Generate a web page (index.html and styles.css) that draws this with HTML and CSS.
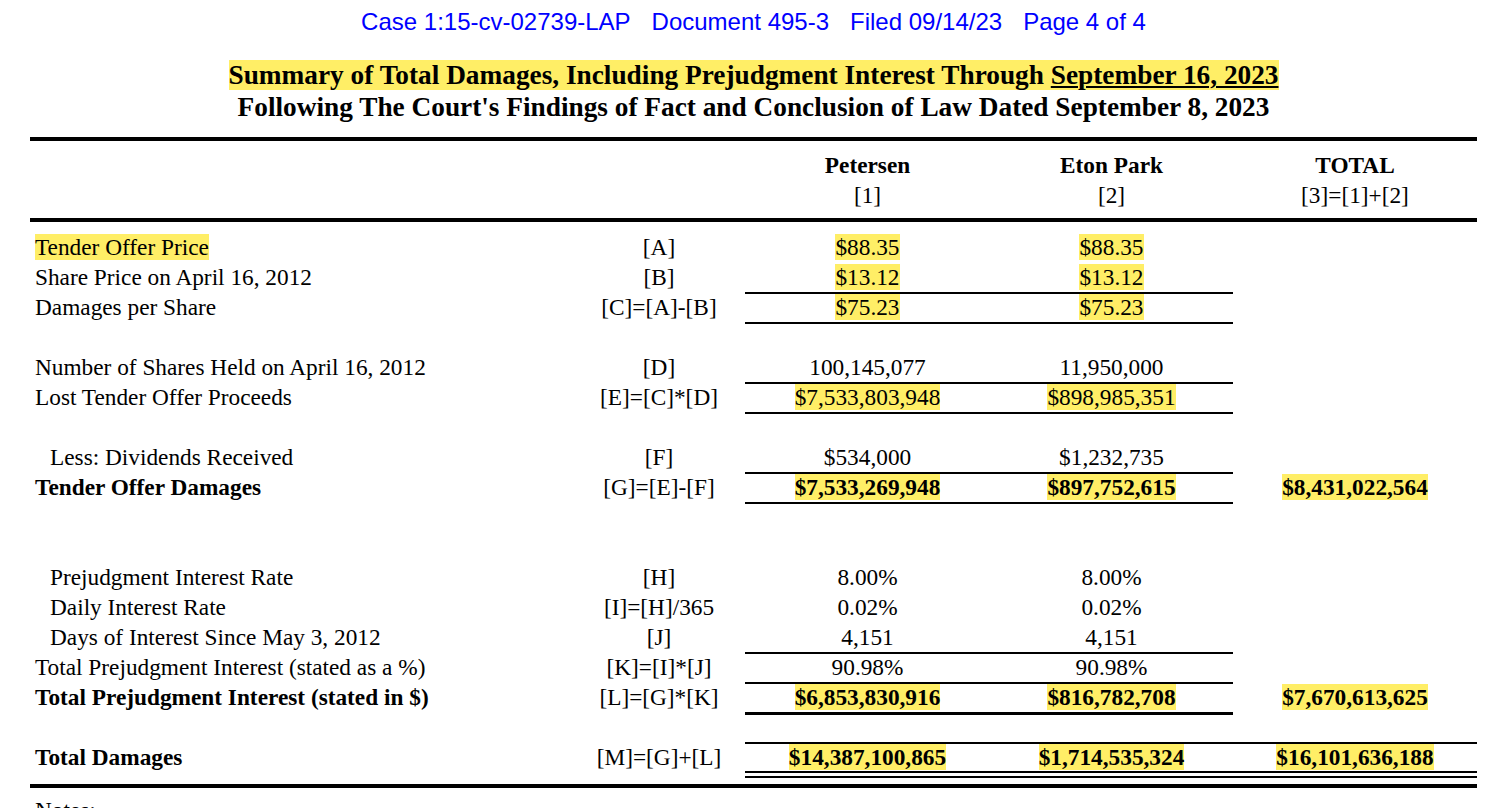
FILE: index.html
```html
<!DOCTYPE html>
<html>
<head>
<meta charset="utf-8">
<link rel="stylesheet" href="styles.css">
</head>
<body>
<div class="page">
  <div class="stamp">
    <span>Case 1:15-cv-02739-LAP</span>
    <span>Document 495-3</span>
    <span>Filed 09/14/23</span>
    <span>Page 4 of 4</span>
  </div>
  <div class="titles">
    <div class="t1"><span class="hl">Summary of Total Damages, Including Prejudgment Interest Through <u class="date">September 16, 2023</u></span></div>
    <div class="t2">Following The Court's Findings of Fact and Conclusion of Law Dated September 8, 2023</div>
  </div>
  <div class="sheet">
    <div class="head">
      <div class="row">
        <div class="lbl"></div><div class="f"></div>
        <div class="v b">Petersen</div><div class="v b">Eton Park</div><div class="v b">TOTAL</div>
      </div>
      <div class="row">
        <div class="lbl"></div><div class="f"></div>
        <div class="v">[1]</div><div class="v">[2]</div><div class="v">[3]=[1]+[2]</div>
      </div>
    </div>
    <div class="body">
      <div class="row">
        <div class="lbl"><span class="hl">Tender Offer Price</span></div><div class="f">[A]</div>
        <div class="v"><span class="hl">$88.35</span></div><div class="v"><span class="hl">$88.35</span></div><div class="v"></div>
      </div>
      <div class="row">
        <div class="lbl">Share Price on April 16, 2012</div><div class="f">[B]</div>
        <div class="v ul"><span class="hl">$13.12</span></div><div class="v ul"><span class="hl">$13.12</span></div><div class="v"></div>
      </div>
      <div class="row">
        <div class="lbl">Damages per Share</div><div class="f">[C]=[A]-[B]</div>
        <div class="v ul"><span class="hl">$75.23</span></div><div class="v ul"><span class="hl">$75.23</span></div><div class="v"></div>
      </div>
      <div class="row gap"></div>
      <div class="row">
        <div class="lbl">Number of Shares Held on April 16, 2012</div><div class="f">[D]</div>
        <div class="v ul">100,145,077</div><div class="v ul">11,950,000</div><div class="v"></div>
      </div>
      <div class="row">
        <div class="lbl">Lost Tender Offer Proceeds</div><div class="f">[E]=[C]*[D]</div>
        <div class="v ul"><span class="hl">$7,533,803,948</span></div><div class="v ul"><span class="hl">$898,985,351</span></div><div class="v"></div>
      </div>
      <div class="row gap"></div>
      <div class="row">
        <div class="lbl ind">Less: Dividends Received</div><div class="f">[F]</div>
        <div class="v ul">$534,000</div><div class="v ul">$1,232,735</div><div class="v"></div>
      </div>
      <div class="row">
        <div class="lbl b">Tender Offer Damages</div><div class="f">[G]=[E]-[F]</div>
        <div class="v ul b"><span class="hl">$7,533,269,948</span></div><div class="v ul b"><span class="hl">$897,752,615</span></div><div class="v b"><span class="hl">$8,431,022,564</span></div>
      </div>
      <div class="row gap"></div>
      <div class="row gap"></div>
      <div class="row">
        <div class="lbl ind">Prejudgment Interest Rate</div><div class="f">[H]</div>
        <div class="v">8.00%</div><div class="v">8.00%</div><div class="v"></div>
      </div>
      <div class="row">
        <div class="lbl ind">Daily Interest Rate</div><div class="f">[I]=[H]/365</div>
        <div class="v">0.02%</div><div class="v">0.02%</div><div class="v"></div>
      </div>
      <div class="row">
        <div class="lbl ind">Days of Interest Since May 3, 2012</div><div class="f">[J]</div>
        <div class="v ul">4,151</div><div class="v ul">4,151</div><div class="v"></div>
      </div>
      <div class="row">
        <div class="lbl">Total Prejudgment Interest (stated as a %)</div><div class="f">[K]=[I]*[J]</div>
        <div class="v ul">90.98%</div><div class="v ul">90.98%</div><div class="v"></div>
      </div>
      <div class="row">
        <div class="lbl b">Total Prejudgment Interest (stated in $)</div><div class="f">[L]=[G]*[K]</div>
        <div class="v b"><span class="hl">$6,853,830,916</span></div><div class="v b"><span class="hl">$816,782,708</span></div><div class="v b"><span class="hl">$7,670,613,625</span></div>
      </div>
      <div class="row gap">
        <div class="lbl"></div><div class="f"></div>
        <div class="v thick"></div><div class="v thick"></div><div class="v"></div>
      </div>
      <div class="row total">
        <div class="lbl b">Total Damages</div><div class="f">[M]=[G]+[L]</div>
        <div class="v dbl b"><span class="hl">$14,387,100,865</span></div><div class="v dbl b"><span class="hl">$1,714,535,324</span></div><div class="v dbl b"><span class="hl">$16,101,636,188</span></div>
      </div>
    </div>
    <div class="foot"></div>
    <div class="notes">Notes:</div>
  </div>
</div>
</body>
</html>
```
FILE: styles.css
```css
html, body {
  margin: 0;
  padding: 0;
  background: #ffffff;
}
body {
  font-family: "Liberation Serif", "Times New Roman", serif;
  color: #000000;
  overflow: hidden;
  height: 808px;
}
.page {
  margin-left: 30px;
  width: 1447px;
}
.stamp {
  display: flex;
  justify-content: center;
  gap: 21px;
  padding-top: 9px;
  font-family: "Liberation Sans", Arial, sans-serif;
  font-size: 24px;
  line-height: 26px;
  color: #0000ff;
  white-space: nowrap;
}
.titles {
  margin-top: 24px;
  text-align: center;
  font-weight: bold;
  font-size: 27.3px;
  line-height: 32px;
  white-space: nowrap;
}
.hl {
  background: #ffee66;
}
.date {
  text-decoration: underline;
  text-decoration-thickness: 2px;
  text-underline-offset: 2px;
}
.sheet {
  margin-top: 14px;
  border-top: 4px solid #000;
}
.head {
  padding: 9px 0 8px;
  border-bottom: 4px solid #000;
}
.body {
  padding-top: 10px;
}
.row {
  display: grid;
  grid-template-columns: 537px 178px 245px 243px 244px;
  height: 30px;
  font-size: 23.3px;
  line-height: 30px;
  white-space: nowrap;
}
.row > div {
  box-sizing: border-box;
}
.lbl {
  padding-left: 5px;
}
.lbl.ind {
  padding-left: 20px;
}
.f, .v {
  text-align: center;
}
.f {
  padding-left: 6px;
}
.b {
  font-weight: bold;
}
.ul {
  border-bottom: 2px solid #000;
}
.thick {
  border-top: 3px solid #000;
}
.row.total {
  height: 36px;
}
.row.total .lbl, .row.total .f {
  padding-top: 2px;
  line-height: 27px;
}
.dbl {
  border-top: 2px solid #000;
  border-bottom: 7px double #000;
  line-height: 27px;
}
.foot {
  margin-top: 6px;
  border-top: 4px solid #000;
}
.notes {
  margin-top: 7px;
  padding-left: 5px;
  font-size: 23.3px;
  line-height: 30px;
}
```
